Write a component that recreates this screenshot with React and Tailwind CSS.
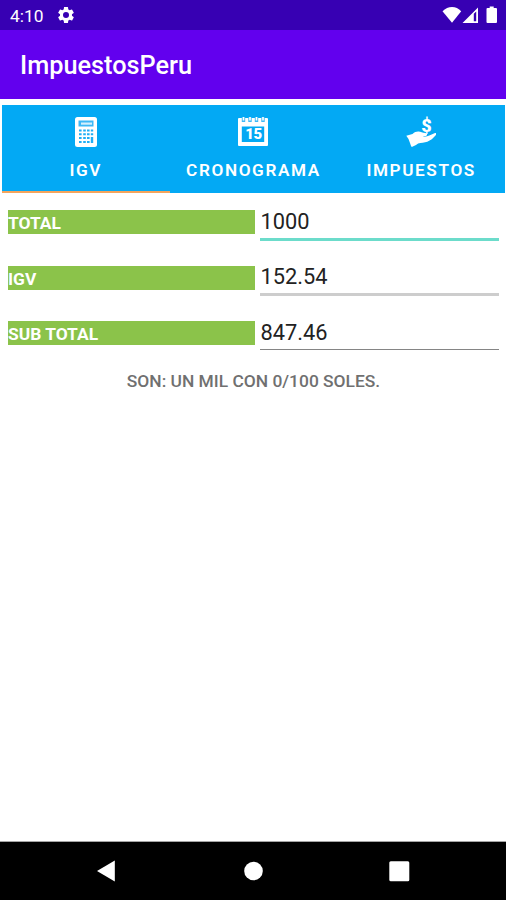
import { useState } from "react";

const tabs = [
  { id: "igv", label: "IGV", Icon: CalculatorIcon },
  { id: "cronograma", label: "CRONOGRAMA", Icon: CalendarIcon },
  { id: "impuestos", label: "IMPUESTOS", Icon: HandIcon },
];

function CalculatorIcon() {
  return (
    <svg width="22" height="30" viewBox="0 0 22 30" fill="none">
      <rect width="22" height="30" rx="2.5" fill="#fff" />
      <path d="M3.5 3.5h15v6h-15z" fill="#3db8f6" />
      <path d="M6 5.5h11v2.2H6z" fill="#d5effd" />
      <g fill="#20aef5">
        <path d="M4 12.5h2.6v2H4zM8.2 12.5h2.6v2H8.2zM12 12.5h2.6v2H12zM15.8 12.5h2.4v2h-2.4z" />
        <path d="M4 16.3h2.6v2H4zM8.2 16.3h2.6v2H8.2zM12 16.3h2.6v2H12zM15.8 16.3h2.4v2h-2.4z" />
        <path d="M4 20.1h2.6v2H4zM8.2 20.1h2.6v2H8.2zM12 20.1h2.6v2H12zM15.8 20.1h2.4v5.8h-2.4z" />
        <path d="M4 23.9h2.6v2H4zM8.2 23.9h2.6v2H8.2zM12 23.9h2.6v2H12z" />
      </g>
    </svg>
  );
}

function CalendarIcon() {
  return (
    <div className="relative h-[30px] w-[30px]">
      <svg width="30" height="30" viewBox="0 0 30 30" fill="none">
        <path d="M0 2a1 1 0 0 1 1-1h28a1 1 0 0 1 1 1v26a1 1 0 0 1-1 1H1a1 1 0 0 1-1-1z" fill="#fff" />
        <path d="M3.8 9.5h22.4V25H3.8z" fill="#03a9f4" />
        <path d="M5.5 0v5M12 0v5M18.5 0v5M25 0v5" stroke="#3db8f6" strokeWidth="3.4" />
        <path d="M5.500 0v3.500M12 0v3.500M18.500 0v3.500M25 0v3.500" stroke="#fff" strokeWidth="1.6" />
      </svg>
      <span className="absolute inset-x-0 top-[10px] text-center text-[15px] leading-[15px] font-black tracking-[-0.5px]">15</span>
    </div>
  );
}

function HandIcon() {
  return (
    <div className="relative h-[30px] w-[30px]">
      <svg width="30" height="30" viewBox="0 0 30 30" fill="#fff">
        <path d="M.3 18.7 6.500 17c2.200-1.800 3.800-2.500 6-2.400 2.300.1 4 1.500 6.700 1.500 2.200 0 2.600 2.300.8 2.800l-3.200.7c2.500.5 4.500 0 6.500-1l5.200-2.400c1.700-.7 2.200.8 1.200 2-2.400 3-5.200 5.200-8.400 6.500-2.800 1.100-6.300.8-9.200 1.800L10 28l-4.200 2q-1-1-1.800-4-1.500-5-3.700-7.300z" />
      </svg>
      <span className="absolute top-0 left-[15px] text-[18px] leading-[18px] font-black">$</span>
    </div>
  );
}

function StatusBar() {
  return (
    <div className="flex h-[30px] items-center bg-[#3700b3] pr-[8px] pl-[10px]">
      <span className="pt-[2px] text-[17.4px] leading-[20px]">4:10</span>
      <svg className="ml-[12px]" width="20" height="20" viewBox="0 0 24 24" fill="#fff">
        <path d="M19.14 12.94c.04-.3.06-.61.06-.94 0-.32-.02-.64-.07-.94l2.03-1.58a.49.49 0 0 0 .12-.61l-1.92-3.32a.488.488 0 0 0-.59-.22l-2.39.96c-.5-.38-1.03-.7-1.62-.94l-.36-2.54a.484.484 0 0 0-.48-.41h-3.84c-.24 0-.43.17-.47.41l-.36 2.54c-.59.24-1.13.57-1.62.94l-2.39-.96c-.22-.08-.47 0-.59.22L2.74 8.87c-.12.21-.08.47.12.61l2.03 1.58c-.05.3-.09.63-.09.94s.02.64.07.94l-2.03 1.58a.49.49 0 0 0-.12.61l1.92 3.32c.12.22.37.29.59.22l2.39-.96c.5.38 1.03.7 1.62.94l.36 2.54c.05.24.24.41.48.41h3.84c.24 0 .44-.17.47-.41l.36-2.54c.59-.24 1.13-.56 1.62-.94l2.39.96c.22.08.47 0 .59-.22l1.92-3.32c.12-.22.07-.47-.12-.61zM12 15.6A3.6 3.6 0 1 1 12 8.4a3.6 3.6 0 0 1 0 7.2z" />
      </svg>
      <svg className="ml-auto" width="56" height="18" viewBox="0 0 56 18" fill="#fff">
        <path d="M.5 5.3C6-.4 14.2-.4 19.2 5.3L10 16.800z" />
        <path fillRule="evenodd" d="M20.5 17 36 1.5V17zM31.8 7.8v7.500h2.400V5.500z" />
        <path d="M44.5 3q0-1 1-1h2.200V.5h4V2h2.300q1 0 1 1v13q0 1-1 1h-8.500q-1 0-1-1z" />
      </svg>
    </div>
  );
}

function Field({ label, value, onChange, line }) {
  return (
    <div className="flex h-[55.5px] items-start">
      <div className="mt-[4.5px] h-[24px] w-[247.4px] bg-[#8bc34a] text-[17.4px] leading-[26px] font-bold text-white">
        {label}
      </div>
      <div className="ml-[5px] flex-1">
        <input
          value={value}
          onChange={onChange}
          readOnly={!onChange}
          className="block h-[32px] w-full bg-transparent text-[21.8px] leading-[32px] text-[#222] outline-none"
        />
        <div className={line} />
      </div>
    </div>
  );
}

function App() {
  const [tab, setTab] = useState("igv");
  const [total, setTotal] = useState("1000");

  const subTotal = (Number(total) || 0) / 1.18;
  const igv = (Number(total) || 0) - subTotal;

  return (
    <div className="flex h-[900px] w-[506px] flex-col overflow-hidden bg-white font-['Roboto',sans-serif] text-white">
      <StatusBar />
      <header className="flex h-[68.5px] items-center bg-[#6200ee] pl-[20px]">
        <h1 className="pt-[3px] text-[25.3px] leading-[30px] font-medium">ImpuestosPeru</h1>
      </header>

      <nav className="mt-[6.5px] mr-[1px] ml-[2px] grid h-[88px] grid-cols-3 bg-[#03a9f4]">
        {tabs.map(({ id, label, Icon }) => (
          <button
            key={id}
            onClick={() => setTab(id)}
            className={`flex flex-col items-center border-b-2 pt-[12px] ${tab === id ? "border-[#f5a55c]" : "border-transparent"}`}
          >
            <Icon />
            <span className="mt-[12.5px] text-[17.2px] leading-[20px] font-semibold tracking-[1.6px]">{label}</span>
          </button>
        ))}
      </nav>

      <main className="flex-1 pt-[12.5px] pr-[7px] pl-[8px]">
        <Field
          label="TOTAL"
          value={total}
          onChange={(e) => setTotal(e.target.value)}
          line="h-[3px] bg-[#6cdccb]"
        />
        <Field label="IGV" value={igv.toFixed(2)} line="h-[3px] bg-[#cdcdcd]" />
        <Field label="SUB TOTAL" value={subTotal.toFixed(2)} line="h-[1.5px] bg-[#858585]" />
        <p className="-mt-px text-center text-[17.4px] leading-[20px] font-medium text-[#707070]">
          SON: UN MIL CON 0/100 SOLES.
        </p>
      </main>

      <footer className="flex h-[59px] items-center border-t border-[#a5a5a5] bg-black">
        <svg width="506" height="58" viewBox="0 0 506 58" fill="#fff">
          <path d="M97 29 114.8 18.5v21z" />
          <circle cx="253.5" cy="29" r="9.3" />
          <rect x="389.3" y="19.3" width="20" height="20" rx="1.5" />
        </svg>
      </footer>
    </div>
  );
}

export default App;
